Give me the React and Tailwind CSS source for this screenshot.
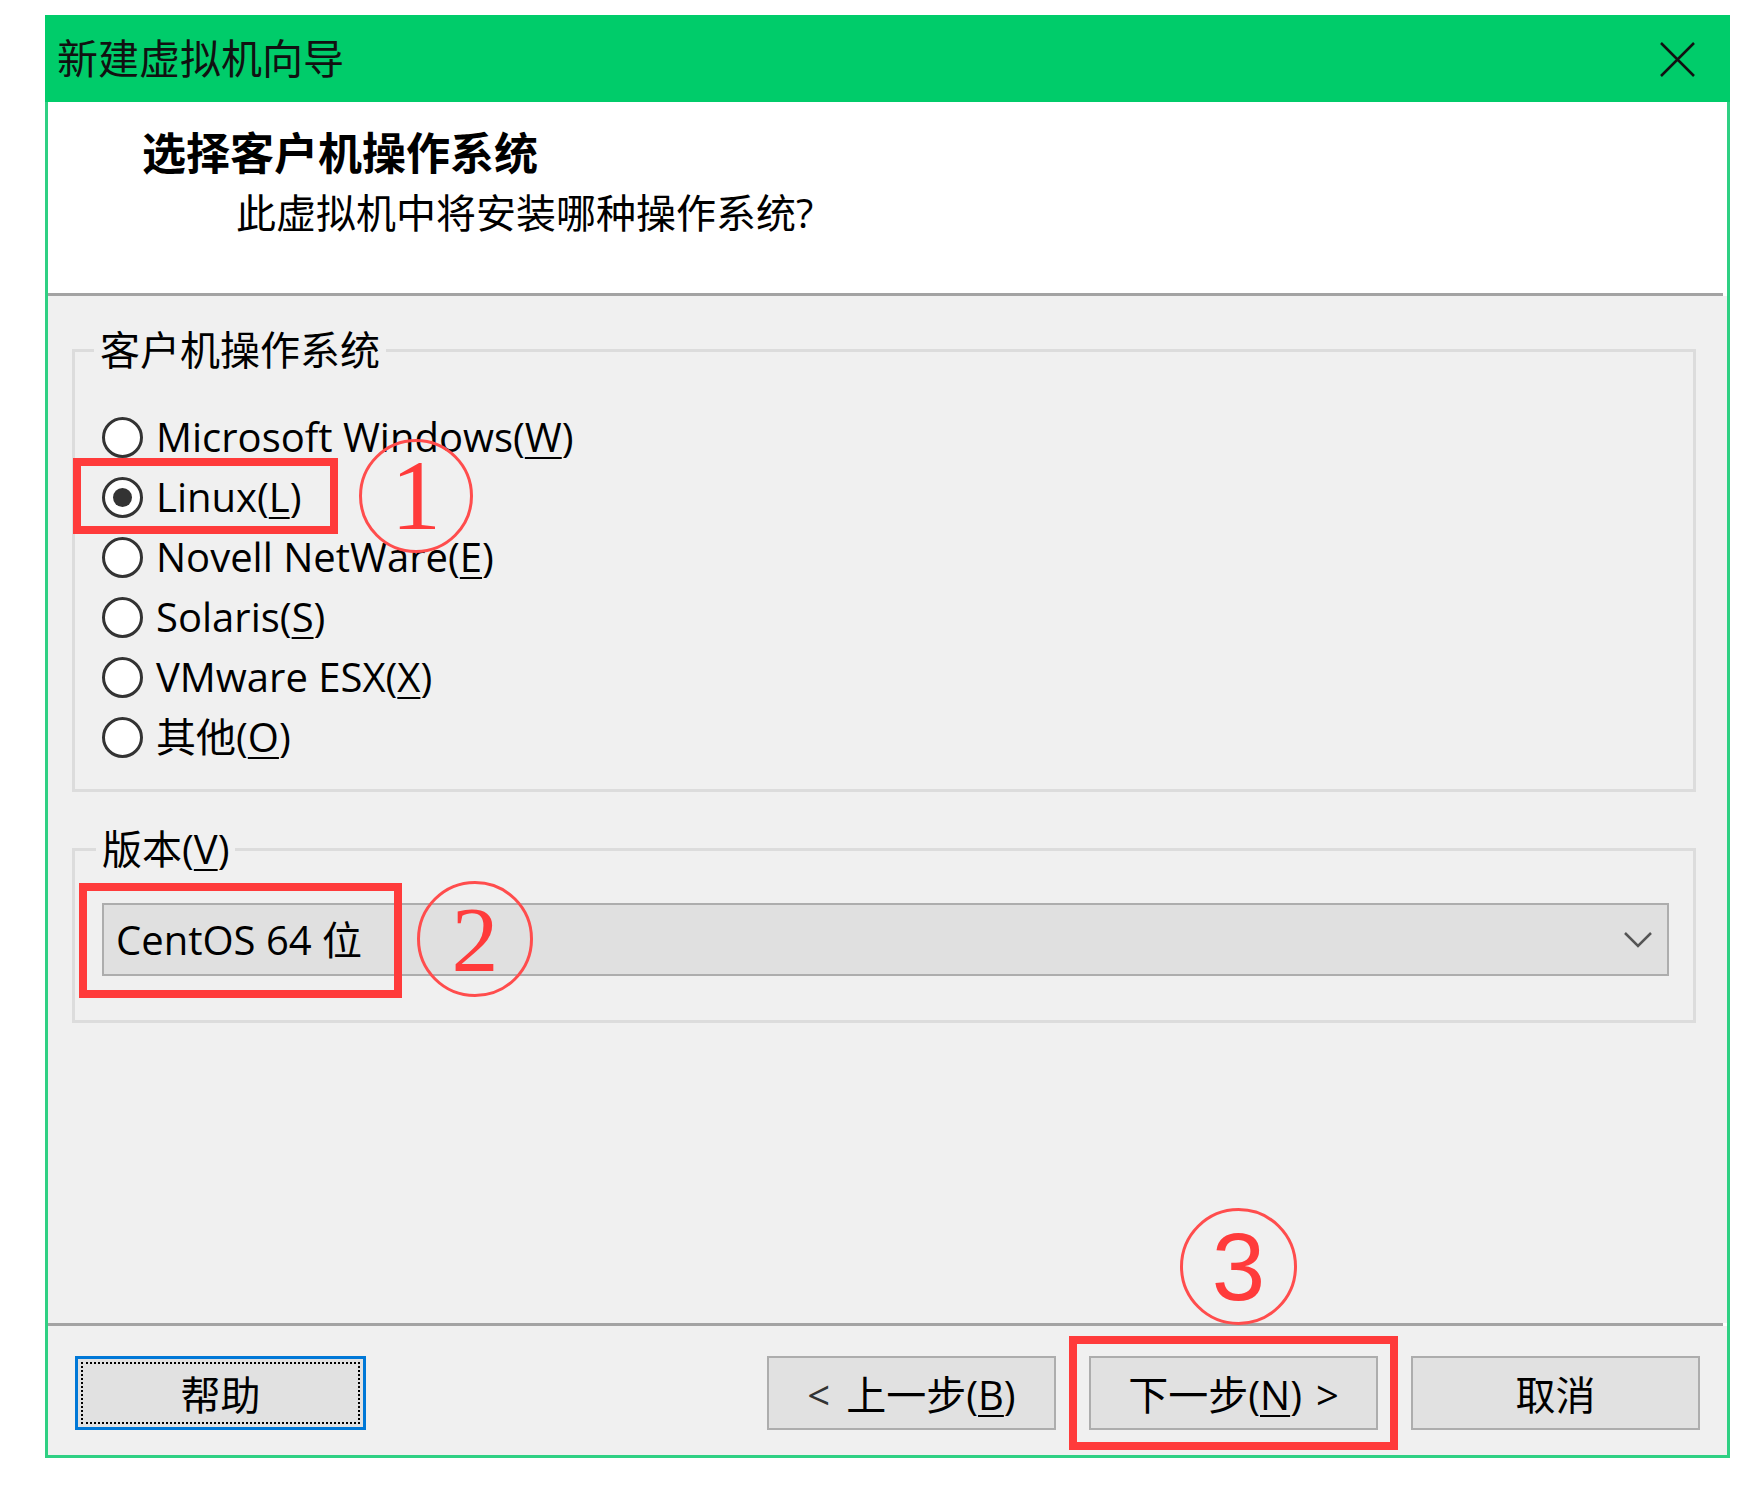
import React from 'react';

const options = [
  { label: 'Microsoft Windows(', key: 'W', checked: false },
  { label: 'Linux(', key: 'L', checked: true },
  { label: 'Novell NetWare(', key: 'E', checked: false },
  { label: 'Solaris(', key: 'S', checked: false },
  { label: 'VMware ESX(', key: 'X', checked: false },
  { label: '其他(', key: 'O', checked: false },
];

function Radio({ label, mnemonic, checked }) {
  return (
    <div className="flex items-center h-[60px]">
      <span className="w-[41px] h-[41px] shrink-0 rounded-full border-[3px] border-[#333] bg-white flex items-center justify-center">
        {checked && <span className="w-[19px] h-[19px] rounded-full bg-[#333]" />}
      </span>
      <span className="ml-[13px] text-[40px] leading-none text-black whitespace-nowrap">
        {label}
        <u className="underline-offset-[5px] decoration-2">{mnemonic}</u>)
      </span>
    </div>
  );
}

function Button({ children, focused }) {
  if (focused) {
    return (
      <div className="w-[291px] h-[74px] border-[3px] border-[#0078d7] bg-[#e1e1e1] p-[3px]">
        <div className="w-full h-full border-2 border-dotted border-black flex items-center justify-center text-[40px] leading-none pt-[4px]">
          {children}
        </div>
      </div>
    );
  }
  return (
    <div className="w-[289px] h-[74px] border-2 border-[#adadad] bg-[#e1e1e1] flex items-center justify-center text-[40px] leading-none whitespace-nowrap pt-[4px]">
      {children}
    </div>
  );
}

export default function App() {
  return (
    <div className="relative w-[1754px] h-[1492px] bg-white overflow-hidden font-['Open_Sans','Noto_Sans_CJK_SC',sans-serif] text-black">
      <div className="ml-[45px] mt-[15px] w-[1685px] h-[1443px] flex flex-col">
        {/* title bar */}
        <div className="h-[87px] shrink-0 bg-[#00cc6a] flex items-center justify-between pl-[12px] pr-[35px]">
          <span className="text-[41px] leading-none text-[#111]">新建虚拟机向导</span>
          <svg width="35" height="35" viewBox="0 0 35 35" className="mt-[2px]">
            <path d="M1 1 L34 34 M34 1 L1 34" stroke="#111" strokeWidth="2.5" fill="none" />
          </svg>
        </div>

        <div className="flex-1 flex flex-col border-x-[3px] border-b-[3px] border-[#2fd083]">
          {/* header */}
          <div className="h-[191px] shrink-0 bg-white pt-[29px]">
            <div className="pl-[94px] text-[44px] leading-none font-bold">选择客户机操作系统</div>
            <div className="pl-[188px] mt-[18px] text-[40px] leading-none">此虚拟机中将安装哪种操作系统?</div>
          </div>
          <div className="h-[3px] shrink-0 bg-[#a3a3a3] mr-[4px]" />

          {/* body */}
          <div className="flex-1 bg-[#f0f0f0] pt-[34px] pl-[24px]">
            <fieldset className="w-[1624px] h-[462px] border-[3px] border-[#dcdcdc]">
              <legend className="ml-[19px] px-[6px] text-[40px] leading-none">客户机操作系统</legend>
              <div className="pl-[27px] pt-[37px]">
                {options.map((o) => (
                  <Radio key={o.key} label={o.label} mnemonic={o.key} checked={o.checked} />
                ))}
              </div>
            </fieldset>

            <fieldset className="mt-[37px] w-[1624px] h-[194px] border-[3px] border-[#dcdcdc]">
              <legend className="ml-[21px] px-[6px] text-[40px] leading-none">
                版本(<u className="underline-offset-[5px] decoration-2">V</u>)
              </legend>
              <div className="pl-[27px] pt-[34px]">
                <div className="w-[1567px] h-[73px] border-2 border-[#adadad] bg-[#e0e0e0] flex items-center justify-between pl-[12px] pr-[14px]">
                  <span className="text-[40px] leading-none">CentOS 64 位</span>
                  <svg width="30" height="19" viewBox="0 0 30 19">
                    <path d="M2 3 L15 16 L28 3" stroke="#555" strokeWidth="2.5" fill="none" />
                  </svg>
                </div>
              </div>
            </fieldset>
          </div>

          {/* footer */}
          <div className="h-[3px] shrink-0 bg-[#a3a3a3] mr-[4px]" />
          <div className="h-[129px] shrink-0 bg-[#f0f0f0] pt-[30px] px-[27px] flex justify-between items-start">
            <Button focused>帮助</Button>
            <div className="flex gap-[33px]">
              <Button>
                <span className="text-[#333] mr-[16px]">&lt;</span>上一步(<u className="underline-offset-[5px] decoration-2">B</u>)
              </Button>
              <Button>
                下一步(<u className="underline-offset-[5px] decoration-2">N</u>)<span className="ml-[14px]">&gt;</span>
              </Button>
              <Button>取消</Button>
            </div>
          </div>
        </div>
      </div>

      {/* red annotations */}
      <div className="absolute left-[73px] top-[458px] w-[265px] h-[76px] border-[8px] border-[#ff3b3b]" />
      <div className="absolute left-[359px] top-[439px] w-[114px] h-[114px] rounded-full border-[3px] border-[#ff4d4d] flex items-center justify-center">
        <span className="font-['Liberation_Serif',serif] text-[100px] leading-none text-[#ff3b3b]">1</span>
      </div>

      <div className="absolute left-[79px] top-[883px] w-[323px] h-[115px] border-[8px] border-[#ff3b3b]" />
      <div className="absolute left-[417px] top-[881px] w-[116px] h-[116px] rounded-full border-[3px] border-[#ff4d4d] flex items-center justify-center">
        <span className="font-['Liberation_Serif',serif] text-[94px] leading-none text-[#ff3b3b]">2</span>
      </div>

      <div className="absolute left-[1069px] top-[1336px] w-[329px] h-[114px] border-[8px] border-[#ff3b3b]" />
      <div className="absolute left-[1180px] top-[1208px] w-[117px] h-[117px] rounded-full border-[3px] border-[#ff4d4d] flex items-center justify-center">
        <span className="font-['Liberation_Sans',sans-serif] text-[96px] leading-none text-[#ff3b3b]">3</span>
      </div>
    </div>
  );
}
